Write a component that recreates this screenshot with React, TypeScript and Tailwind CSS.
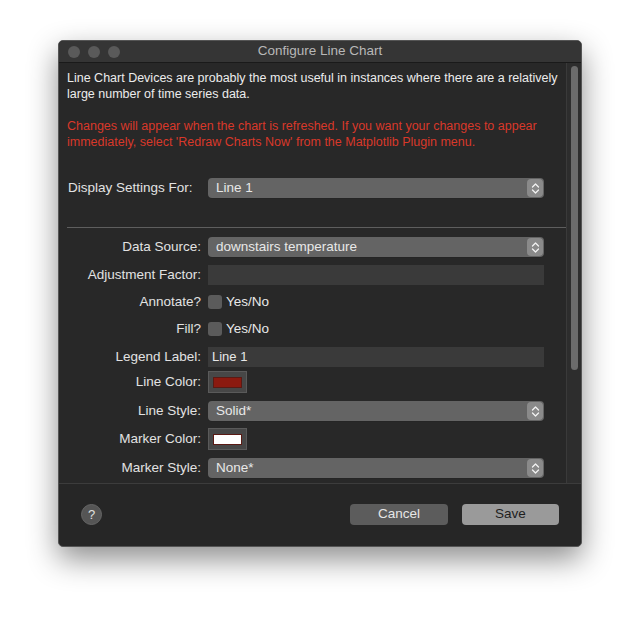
import React from "react";

const Stepper = () => (
  <div className="w-[16px] h-[18px] mr-[1px] rounded-[4px] bg-[#8a8a8a] flex items-center justify-center">
    <svg width="9" height="13" viewBox="0 0 9 13" fill="none" stroke="#f2f2f2" strokeWidth="1.3" strokeLinecap="round" strokeLinejoin="round">
      <path d="M1.5 5 L4.5 2 L7.5 5" />
      <path d="M1.5 8 L4.5 11 L7.5 8" />
    </svg>
  </div>
);

const Select = ({ v }: { v: string }) => (
  <div className="flex-1 h-[20px] rounded-[4px] bg-[#646464] flex items-center justify-between pl-[8px] text-[#e8e8e8] text-[13.5px] shadow-[0_0.5px_0_#222]">
    <span>{v}</span>
    <Stepper />
  </div>
);

const Text = ({ v }: { v?: string }) => (
  <div className="flex-1 h-[20px] bg-[#3a3a3a] flex items-center pl-[4px] text-[#e8e8e8] text-[13px]">{v}</div>
);

const Check = () => (
  <div className="flex items-center gap-[4px]">
    <div className="w-[14px] h-[14px] rounded-[3px] bg-[#5b5b5b]" />
    <span className="text-[#e8e8e8] text-[13.5px]">Yes/No</span>
  </div>
);

const Color = ({ c }: { c: string }) => (
  <div className="w-[39px] h-[22px] bg-[#474747] border border-[#5a5a5a] flex items-center justify-center">
    <div className="w-[29px] h-[11px]" style={{ background: c, border: "1px solid #5a1a14" }} />
  </div>
);

const Row = ({ label, h, children }: { label: string; h: number; children: React.ReactNode }) => (
  <div className="flex items-center" style={{ height: h }}>
    <div className="w-[141px] text-right pr-[7px] text-[#e2e2e2] text-[13.5px] whitespace-nowrap">{label}</div>
    <div className="flex-1 flex items-center mr-[22px]">{children}</div>
  </div>
);

export default function App() {
  return (
    <div className="w-[640px] h-[625px] bg-white pt-[40px] pl-[58px]" style={{ fontFamily: "'Liberation Sans', Arial, sans-serif" }}>
      <div className="w-[524px] h-[507px] bg-[#262626] rounded-[5px] border border-[#555] shadow-[0_12px_30px_rgba(0,0,0,0.45)] flex flex-col overflow-hidden">
        <div className="h-[22px] bg-[#353535] border-b border-[#1a1a1a] flex items-center relative">
          <div className="flex gap-[8px] pl-[9px]">
            <div className="w-[12px] h-[12px] rounded-full bg-[#5a5a5a]" />
            <div className="w-[12px] h-[12px] rounded-full bg-[#5a5a5a]" />
            <div className="w-[12px] h-[12px] rounded-full bg-[#5a5a5a]" />
          </div>
          <div className="absolute inset-0 flex items-center justify-center text-[#b8b8b8] text-[13.5px]">Configure Line Chart</div>
        </div>
        <div className="h-[421px] flex bg-[#282828] border-b border-[#3c3c3c]">
          <div className="flex-1 overflow-hidden pl-[8px] pt-[7px]">
            <div className="text-[#ececec] text-[12.5px] leading-[16px] pr-[4px]">
              Line Chart Devices are probably the most useful in instances where there are a relatively large number of time series data.
            </div>
            <div className="text-[#d9382a] text-[12.5px] leading-[16px] mt-[16px] pr-[4px]">
              Changes will appear when the chart is refreshed. If you want your changes to appear immediately, select 'Redraw Charts Now' from the Matplotlib Plugin menu.
            </div>
            <div className="flex items-center mt-[28px] h-[20px]">
              <div className="w-[141px] pl-[1px] text-[#e2e2e2] text-[13.5px] whitespace-nowrap">Display Settings For:</div>
              <div className="flex-1 flex mr-[22px]"><Select v="Line 1" /></div>
            </div>
            <div className="h-px bg-[#5e5e5e] mt-[29px] mr-[-8px]" />
            <div className="mt-[9px] flex flex-col">
              <Row label="Data Source:" h={20}><Select v="downstairs temperature" /></Row>
              <div className="h-[8px]" />
              <Row label="Adjustment Factor:" h={20}><Text /></Row>
              <div className="h-[5px]" />
              <Row label="Annotate?" h={24}><Check /></Row>
              <div className="h-[3px]" />
              <Row label="Fill?" h={24}><Check /></Row>
              <div className="h-[6px]" />
              <Row label="Legend Label:" h={20}><Text v="Line 1" /></Row>
              <div className="h-[2px]" />
              <Row label="Line Color:" h={26}><Color c="#8b1a10" /></Row>
              <div className="h-[6px]" />
              <Row label="Line Style:" h={20}><Select v="Solid*" /></Row>
              <div className="h-[5px]" />
              <Row label="Marker Color:" h={26}><Color c="#ffffff" /></Row>
              <div className="h-[6px]" />
              <Row label="Marker Style:" h={20}><Select v="None*" /></Row>
            </div>
          </div>
          <div className="w-[15px] bg-[#2d2d2d] border-l border-[#3a3a3a] pt-[3px] flex justify-center">
            <div className="w-[7px] h-[304px] rounded-full bg-[#6b6b6b]" />
          </div>
        </div>
        <div className="flex-1 flex items-center pl-[22px] pr-[22px] pb-[1px]">
          <div className="w-[21px] h-[21px] rounded-full bg-[#555] border border-[#666] flex items-center justify-center text-[#e0e0e0] text-[13px]">?</div>
          <div className="flex-1" />
          <div className="w-[98px] h-[21px] rounded-[4px] bg-[#5c5c5c] flex items-center justify-center text-[#e6e6e6] text-[13.5px]">Cancel</div>
          <div className="w-[97px] h-[21px] rounded-[4px] bg-[#9a9a9a] ml-[14px] flex items-center justify-center text-[#1e1e1e] text-[13.5px]">Save</div>
        </div>
      </div>
    </div>
  );
}
